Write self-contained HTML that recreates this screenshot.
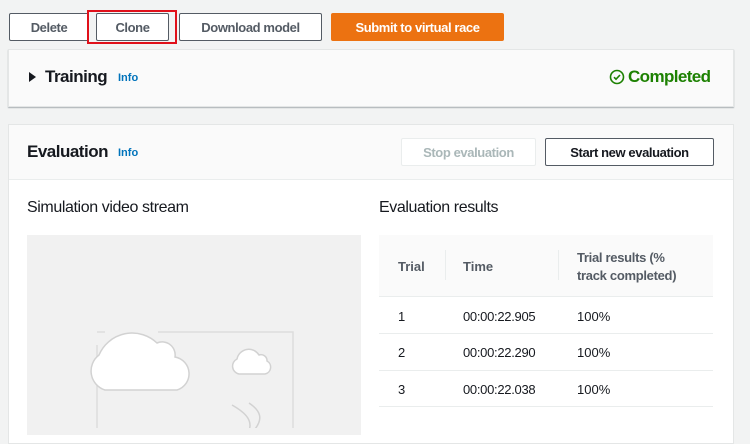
<!DOCTYPE html>
<html><head><style>
*{margin:0;padding:0;box-sizing:border-box}
body{width:750px;height:428px;overflow:hidden;background:#f2f3f3;font-family:"Liberation Sans",sans-serif;position:relative;color:#16191f}
.a{position:absolute}
.btn{position:absolute;top:13px;height:28px;border:1px solid #545b64;background:#fff;border-radius:2px;font-size:13px;font-weight:bold;color:#545b64;display:flex;align-items:center;justify-content:center;letter-spacing:-0.4px}
.info{color:#0073bb;font-size:11px;font-weight:bold}
</style></head><body>
<div class="btn" style="left:9px;width:80px">Delete</div>
<div class="btn" style="left:96px;width:73px">Clone</div>
<div class="a" style="left:87px;top:10px;width:90px;height:34px;border:2px solid #e0101a"></div>
<div class="btn" style="left:179px;width:143px">Download model</div>
<div class="btn" style="left:331px;width:173px;background:#ec7211;border-color:#ec7211;color:#fff">Submit to virtual race</div>

<div class="a" style="left:8px;top:49px;width:726px;height:58px;background:#fafafa;box-shadow:0 1px 1px #aab0b5;border:1px solid #e4e6e6"></div>
<div class="a" style="left:29px;top:72px;width:0;height:0;border-left:7px solid #16191f;border-top:5px solid transparent;border-bottom:5px solid transparent"></div>
<div class="a" style="left:45px;top:67px;font-size:17px;font-weight:bold;letter-spacing:-0.5px">Training</div>
<div class="a info" style="left:118px;top:72px">Info</div>
<svg class="a" style="left:609px;top:69px" width="16" height="16" viewBox="0 0 16 16"><circle cx="8" cy="8" r="6.5" fill="none" stroke="#1d8102" stroke-width="1.6"/><path d="M5 8.2l2 2 4-4.2" fill="none" stroke="#1d8102" stroke-width="1.6"/></svg>
<div class="a" style="left:628px;top:67px;font-size:17px;font-weight:bold;color:#1d8102;letter-spacing:-0.6px">Completed</div>

<div class="a" style="left:8px;top:124px;width:726px;height:320px;background:#fff;border:1px solid #e4e6e6"></div>
<div class="a" style="left:9px;top:125px;width:724px;height:55px;background:#fafafa;border-bottom:1px solid #eaeded"></div>
<div class="a" style="left:27px;top:142px;font-size:17px;font-weight:bold;letter-spacing:-0.5px">Evaluation</div>
<div class="a info" style="left:118px;top:147px">Info</div>
<div class="btn" style="left:401px;top:138px;width:135px;border-color:#eaeded;color:#aab7b8">Stop evaluation</div>
<div class="btn" style="left:545px;top:138px;width:169px;color:#16191f">Start new evaluation</div>

<div class="a" style="left:27px;top:199px;font-size:16px;letter-spacing:-0.4px">Simulation video stream</div>
<div class="a" style="left:379px;top:199px;font-size:16px;letter-spacing:-0.4px">Evaluation results</div>
<div class="a" style="left:27px;top:235px;width:334px;height:200px;background:#f1f1f1"></div>
<svg class="a" style="left:27px;top:235px" width="334" height="193">
<path d="M70 110V193M70 97H78M131 97H266V193" fill="none" stroke="#ddd" stroke-width="1.5"/>
<path d="M78 155A20 20 0 0 1 72 120A36 36 0 0 1 130 108A13 13 0 0 1 148 122A17 17 0 0 1 150 155Z" fill="#fff" stroke="#d2d2d2" stroke-width="1.5"/>
<path d="M212 139A8 8 0 0 1 210 124A12 12 0 0 1 232 120A6 6 0 0 1 240 126A7 7 0 0 1 238 139Z" fill="#fff" stroke="#d2d2d2" stroke-width="1.5"/>
<path d="M205 170c14 8 22 16 16 28M222 168c12 8 14 16 6 26" fill="none" stroke="#d2d2d2" stroke-width="1.5"/>
</svg>
<div class="a" style="left:379px;top:235px;width:334px;height:62px;background:#fafafa;border-bottom:1px solid #eaeded"></div>
<div class="a" style="left:445px;top:250px;width:1px;height:30px;background:#eaeded"></div>
<div class="a" style="left:558px;top:250px;width:1px;height:30px;background:#eaeded"></div>
<div class="a" style="left:398px;top:259px;font-size:13px;font-weight:bold;color:#545b64">Trial</div>
<div class="a" style="left:463px;top:259px;font-size:13px;font-weight:bold;color:#545b64">Time</div>
<div class="a" style="left:577px;top:249px;font-size:13px;font-weight:bold;color:#545b64;line-height:18px;letter-spacing:-0.3px">Trial results (%<br>track completed)</div>
<div class="a" style="left:379px;top:333px;width:334px;height:1px;background:#eaeded"></div>
<div class="a" style="left:379px;top:370px;width:334px;height:1px;background:#eaeded"></div>
<div class="a" style="left:379px;top:406px;width:334px;height:1px;background:#eaeded"></div>
<div class="a" style="left:398px;top:309px;font-size:13px">1</div>
<div class="a" style="left:463px;top:309px;font-size:13px;letter-spacing:-0.3px">00:00:22.905</div>
<div class="a" style="left:577px;top:309px;font-size:13px">100%</div>
<div class="a" style="left:398px;top:345px;font-size:13px">2</div>
<div class="a" style="left:463px;top:345px;font-size:13px;letter-spacing:-0.3px">00:00:22.290</div>
<div class="a" style="left:577px;top:345px;font-size:13px">100%</div>
<div class="a" style="left:398px;top:382px;font-size:13px">3</div>
<div class="a" style="left:463px;top:382px;font-size:13px;letter-spacing:-0.3px">00:00:22.038</div>
<div class="a" style="left:577px;top:382px;font-size:13px">100%</div>
</body></html>
